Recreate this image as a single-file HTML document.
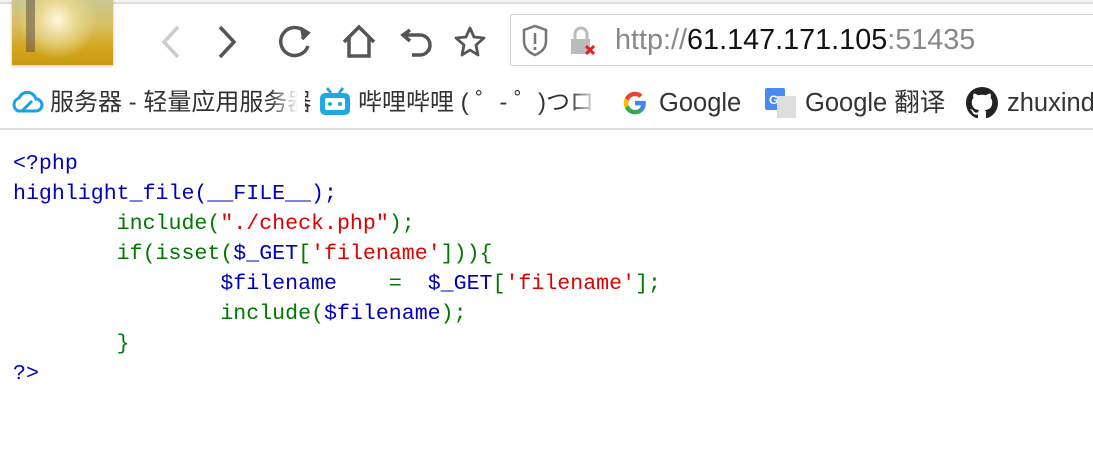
<!DOCTYPE html>
<html><head><meta charset="utf-8"><style>
*{margin:0;padding:0;box-sizing:border-box}
body{width:1093px;height:454px;background:#fff;position:relative;overflow:hidden;font-family:"Liberation Sans","Noto Sans CJK SC",sans-serif}
.abs{position:absolute}
.tabline{left:0;top:0;width:1093px;height:4px;border-bottom:2px solid #ddd;background:#f3f3f3}
.thumb{left:12px;top:0;width:101px;height:65px;background:radial-gradient(circle at 45% 30%,#fff8e0 0%,#e8d890 25%,transparent 55%),linear-gradient(180deg,#c8c890 0%,#d8c060 40%,#d4a820 70%,#c89a10 100%);box-shadow:0 1px 3px rgba(0,0,0,.25)}
.addr{left:510px;top:14px;width:600px;height:52px;border:1px solid #d5d5d5;border-radius:2px;background:#fff}
.url{left:615px;top:22px;font-size:28.8px;line-height:36px;color:#888;white-space:nowrap}
.url b{font-weight:normal;color:#111}
.bm{top:86px;font-size:24px;line-height:34px;height:34px;color:#333;white-space:nowrap}
.sep{left:0;top:128px;width:1093px;height:2px;background:#dcdcdc}
pre{position:absolute;left:13px;top:149px;font-family:"Liberation Mono",monospace;font-size:21.6px;line-height:30px;color:#0000BB}
.g{color:#007700}.r{color:#DD0000}
</style></head><body>
<div class="abs tabline"></div>
<div class="abs thumb"><div style="position:absolute;left:14px;top:0;width:9px;height:52px;background:#6a5a48;opacity:.6"></div></div>
<svg class="abs" style="left:150px;top:20px" width="350" height="45" viewBox="0 0 350 45" fill="none" stroke-width="3.5">
<path d="M28 7 L14 22 L28 37" stroke="#ccc"/>
<path d="M70 7 L84 22 L70 37" stroke="#555"/>
<path d="M155 12 A14 14 0 1 0 158 26" stroke="#555"/>
<path d="M150 8 L158 13 L152 19" stroke="#555" fill="#555"/>
<path d="M194 22 L209 7 L224 22 M199 18 V36 H219 V18" stroke="#555"/>
<path d="M260 10 L253 15 L260 21 M253 15 H270 A10 10 0 0 1 270 35 H262" stroke="#555"/>
<path d="M320 8 L324 17 L334 18 L326 25 L328 35 L320 30 L312 35 L314 25 L306 18 L316 17 Z" stroke="#555" stroke-width="2.8" stroke-linejoin="round"/>
</svg>
<div class="abs addr"></div>
<svg class="abs" style="left:520px;top:24px" width="100" height="34" viewBox="0 0 100 34" fill="none">
<path d="M4 6 L15 2 L26 6 V17 C26 25 20 29 15 31 C10 29 4 25 4 17 Z" stroke="#777" stroke-width="2.5"/>
<path d="M15 9 V20 M15 23 V26" stroke="#777" stroke-width="2.5"/>
<path d="M55 15 V10 A6 6 0 0 1 67 10 V15" stroke="#bbb" stroke-width="3"/>
<rect x="51" y="15" width="19" height="15" fill="#bbb"/>
<path d="M66 22 L74 30 M74 22 L66 30" stroke="#e02020" stroke-width="3"/>
</svg>
<div class="abs url">http://<b>61.147.171.105</b>:51435</div>
<svg class="abs" style="left:10px;top:89px" width="34" height="26" viewBox="0 0 34 26" fill="none" stroke="#1aa0e8" stroke-width="3"><path d="M8 22 H26 A6 6 0 0 0 26 10 A9 9 0 0 0 9 9 A7 7 0 0 0 8 22 Z M12 22 L22 12"/></svg>
<div class="abs bm" style="left:50px">服务器 - 轻量应用服务器</div>
<div class="abs" style="left:270px;top:80px;width:35px;height:45px;background:linear-gradient(90deg,rgba(255,255,255,0),#fff 80%)"></div>
<svg class="abs" style="left:318px;top:86px" width="34" height="32" viewBox="0 0 34 32"><path d="M9 2 L13 7 M25 2 L21 7" stroke="#20a8e0" stroke-width="3"/><rect x="2" y="7" width="30" height="22" rx="5" fill="#20a8e0"/><rect x="7" y="12" width="20" height="12" rx="2" fill="#fff"/><circle cx="12" cy="18" r="2" fill="#20a8e0"/><circle cx="22" cy="18" r="2" fill="#20a8e0"/></svg>
<div class="abs bm" style="left:358px">哔哩哔哩 ( ゜- ゜)つロ</div>
<div class="abs" style="left:570px;top:80px;width:35px;height:45px;background:linear-gradient(90deg,rgba(255,255,255,0),#fff 80%)"></div>
<svg class="abs" style="left:622px;top:90px" width="26" height="26" viewBox="0 0 24 24"><path d="M22 12.2c0-.8-.1-1.5-.2-2.2H12v4.2h5.6a4.8 4.8 0 0 1-2.1 3.1v2.6h3.4c2-1.8 3.1-4.5 3.1-7.7z" fill="#4285F4"/><path d="M12 22.5c2.8 0 5.2-.9 6.9-2.5l-3.4-2.6c-.9.6-2.1 1-3.5 1-2.7 0-5-1.8-5.8-4.3H2.7v2.7A10.5 10.5 0 0 0 12 22.5z" fill="#34A853"/><path d="M6.2 14.1a6.3 6.3 0 0 1 0-4.1V7.3H2.7a10.5 10.5 0 0 0 0 9.5z" fill="#FBBC05"/><path d="M12 5.6c1.5 0 2.9.5 4 1.6l3-3A10.5 10.5 0 0 0 2.7 7.3L6.2 10C7 7.5 9.3 5.6 12 5.6z" fill="#EA4335"/></svg>
<div class="abs bm" style="left:659px;font-size:25.5px">Google</div>
<svg class="abs" style="left:764px;top:87px" width="34" height="32" viewBox="0 0 34 32"><rect x="1" y="1" width="20" height="22" rx="2" fill="#4a8af4"/><rect x="13" y="9" width="19" height="22" fill="#ddd"/><text x="5" y="17" font-size="12" fill="#fff" font-family="Liberation Sans" font-weight="bold">G</text></svg>
<div class="abs bm" style="left:805px;font-size:25.5px">Google 翻译</div>
<svg class="abs" style="left:966px;top:87px" width="32" height="32" viewBox="0 0 16 16"><path fill="#222" d="M8 0C3.58 0 0 3.580 0 8c0 3.54 2.29 6.53 5.47 7.59.4.07.55-.17.55-.38 0-.19-.01-.82-.01-1.49-2.01.37-2.530-.49-2.69-.94-.09-.23-.48-.94-.82-1.13-.28-.15-.68-.52-.01-.53.63-.01 1.08.58 1.23.82.72 1.21 1.87.87 2.33.66.07-.52.28-.87.51-1.07-1.780-.2-3.640-.89-3.640-3.95 0-.87.31-1.59.82-2.15-.08-.2-.36-1.02.08-2.12 0 0 .67-.21 2.2.82.64-.18 1.32-.27 2-.27.68 0 1.36.09 2 .27 1.53-1.04 2.2-.82 2.2-.82.44 1.1.16 1.92.08 2.12.51.56.82 1.27.82 2.15 0 3.07-1.87 3.75-3.65 3.95.29.25.54.73.54 1.48 0 1.07-.01 1.93-.01 2.2 0 .21.15.46.55.38A8.013 8.013 0 0 0 16 8c0-4.42-3.58-8-8-8z"/></svg>
<div class="abs bm" style="left:1007px;font-size:25.5px">zhuxindong</div>
<div class="abs sep"></div>
<pre>&lt;?php
highlight_file(__FILE__);
        <span class="g">include(</span><span class="r">"./check.php"</span><span class="g">);
        if(isset(</span>$_GET<span class="g">[</span><span class="r">'filename'</span><span class="g">])){
                </span>$filename    <span class="g">=  </span>$_GET<span class="g">[</span><span class="r">'filename'</span><span class="g">];
                include(</span>$filename<span class="g">);
        }
</span>?&gt;</pre>
</body></html>
